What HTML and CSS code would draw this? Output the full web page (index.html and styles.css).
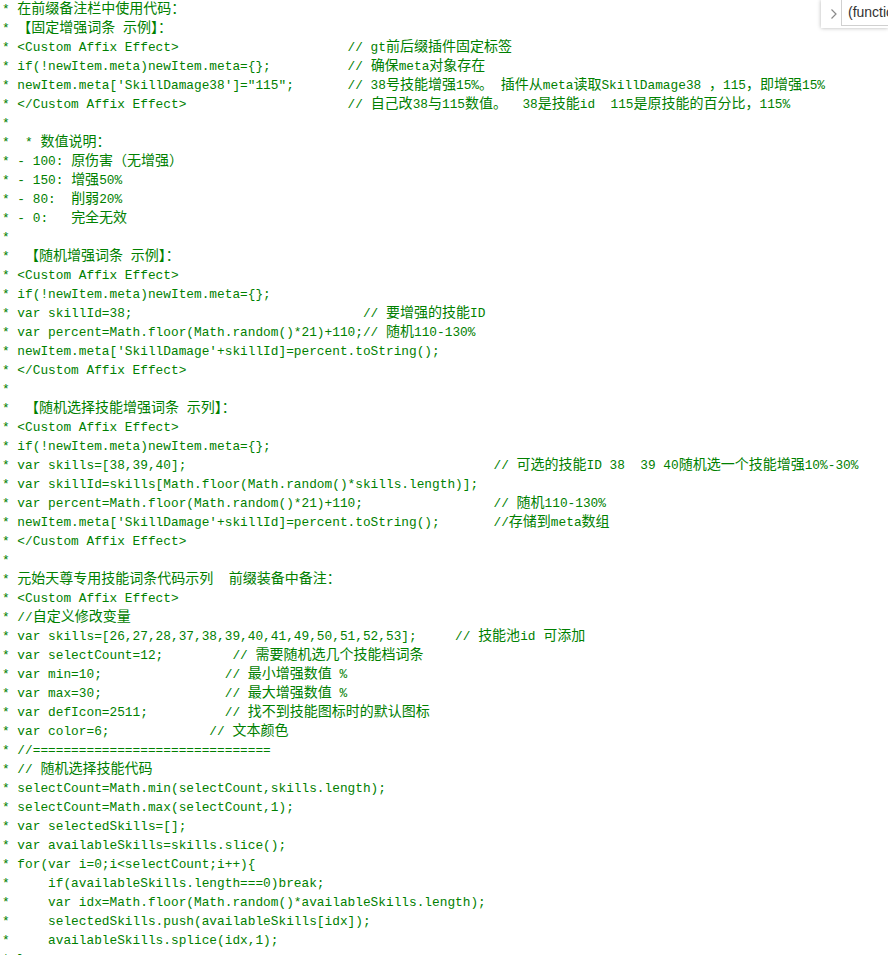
FILE: index.html
```html
<!DOCTYPE html>
<html lang="zh-CN">
<head>
<meta charset="utf-8">
<title>code</title>
<link rel="stylesheet" href="styles.css">
</head>
<body>
<pre class="code">* <span class="z">在前缀备注栏中使用代码：</span>
* <span class="z">【固定增强词条</span> <span class="z">示例】：</span>
* &lt;Custom Affix Effect&gt;                      // gt<span class="z">前后缀插件固定标签</span>
* if(!newItem.meta)newItem.meta={};          // <span class="z">确保</span>meta<span class="z">对象存在</span>
* newItem.meta['SkillDamage38']="115";       // 38<span class="z">号技能增强</span>15%<span class="z">。</span> <span class="z">插件从</span>meta<span class="z">读取</span>SkillDamage38 <span class="z">，</span>115<span class="z">，即增强</span>15%
* &lt;/Custom Affix Effect&gt;                     // <span class="z">自己改</span>38<span class="z">与</span>115<span class="z">数值。</span>  38<span class="z">是技能</span>id  115<span class="z">是原技能的百分比，</span>115%
*
*  * <span class="z">数值说明：</span>
* - 100: <span class="z">原伤害（无增强）</span>
* - 150: <span class="z">增强</span>50%
* - 80:  <span class="z">削弱</span>20%
* - 0:   <span class="z">完全无效</span>
*
*  <span class="z">【随机增强词条</span> <span class="z">示例】：</span>
* &lt;Custom Affix Effect&gt;
* if(!newItem.meta)newItem.meta={};
* var skillId=38;                              // <span class="z">要增强的技能</span>ID
* var percent=Math.floor(Math.random()*21)+110;// <span class="z">随机</span>110-130%
* newItem.meta['SkillDamage'+skillId]=percent.toString();
* &lt;/Custom Affix Effect&gt;
*
*  <span class="z">【随机选择技能增强词条</span> <span class="z">示列】：</span>
* &lt;Custom Affix Effect&gt;
* if(!newItem.meta)newItem.meta={};
* var skills=[38,39,40];                                        // <span class="z">可选的技能</span>ID 38  39 40<span class="z">随机选一个技能增强</span>10%-30%
* var skillId=skills[Math.floor(Math.random()*skills.length)];
* var percent=Math.floor(Math.random()*21)+110;                 // <span class="z">随机</span>110-130%
* newItem.meta['SkillDamage'+skillId]=percent.toString();       //<span class="z">存储到</span>meta<span class="z">数组</span>
* &lt;/Custom Affix Effect&gt;
*
* <span class="z">元始天尊专用技能词条代码示列</span>  <span class="z">前缀装备中备注：</span>
* &lt;Custom Affix Effect&gt;
* //<span class="z">自定义修改变量</span>
* var skills=[26,27,28,37,38,39,40,41,49,50,51,52,53];     // <span class="z">技能池</span>id <span class="z">可添加</span>
* var selectCount=12;         // <span class="z">需要随机选几个技能档词条</span>
* var min=10;                // <span class="z">最小增强数值</span> %
* var max=30;                // <span class="z">最大增强数值</span> %
* var defIcon=2511;          // <span class="z">找不到技能图标时的默认图标</span>
* var color=6;             // <span class="z">文本颜色</span>
* //===============================
* // <span class="z">随机选择技能代码</span>
* selectCount=Math.min(selectCount,skills.length);
* selectCount=Math.max(selectCount,1);
* var selectedSkills=[];
* var availableSkills=skills.slice();
* for(var i=0;i&lt;selectCount;i++){
*     if(availableSkills.length===0)break;
*     var idx=Math.floor(Math.random()*availableSkills.length);
*     selectedSkills.push(availableSkills[idx]);
*     availableSkills.splice(idx,1);
* }</pre>
<div class="console">
  <svg class="chev" width="8" height="12" viewBox="0 0 8 12"><polyline points="1.5,1.5 6,6 1.5,10.5" fill="none" stroke="#8a8a8a" stroke-width="1.2"/></svg>
  <div class="input">(function</div>
</div>
</body>
</html>
```
FILE: styles.css
```css
html, body {
  margin: 0;
  padding: 0;
  background: #fff;
}
body {
  overflow: hidden;
}
.code {
  margin: 0;
  padding: 0 0 0 2px;
  font-family: "Liberation Mono", monospace;
  font-size: 12.8px;
  line-height: 19px;
  color: #008000;
  white-space: pre;
}
.z {
  font-family: "Noto Sans CJK SC", sans-serif;
  font-size: 14px;
  line-height: 0;
}
.console {
  position: absolute;
  top: 0;
  right: 0;
  width: 67px;
  height: 28px;
  background: #fff;
  box-shadow: 0 0 4px rgba(0, 0, 0, 0.3);
  display: flex;
  align-items: flex-start;
  overflow: hidden;
}
.chev {
  margin: 8px 0 0 9px;
  flex: none;
}
.input {
  margin-left: 3px;
  margin-top: -1px;
  height: 25px;
  border: 1px solid #d0d0d0;
  border-right: none;
  padding-left: 6px;
  font-family: "Liberation Sans", Arial, sans-serif;
  font-size: 14px;
  line-height: 25px;
  color: #333;
  white-space: nowrap;
  flex: 1;
}
```
